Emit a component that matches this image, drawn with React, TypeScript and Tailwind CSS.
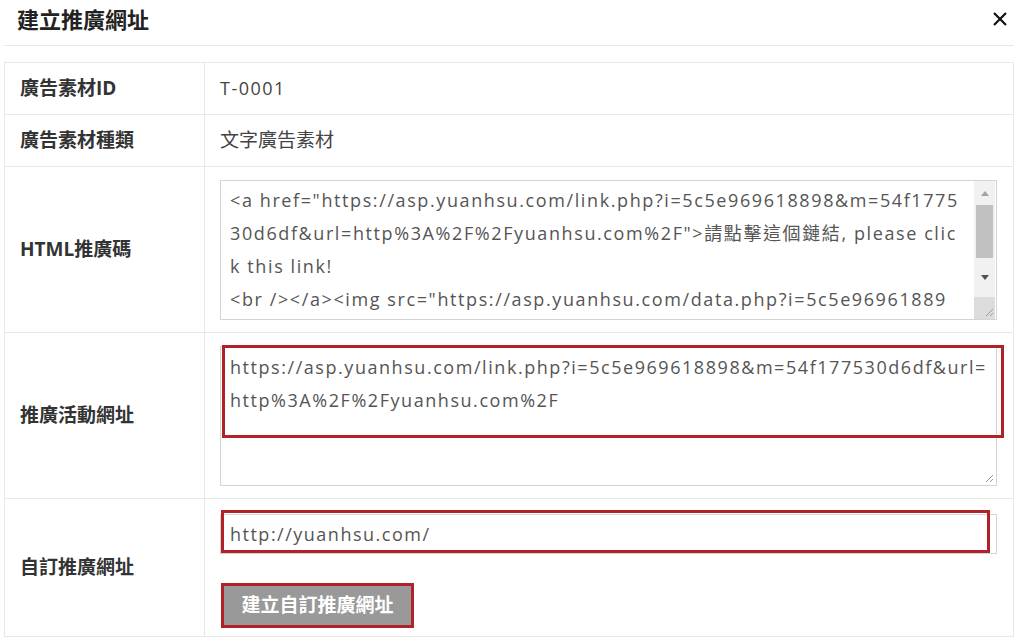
import React from 'react';

const font = { fontFamily: '"Open Sans", "Noto Sans CJK TC", sans-serif' };

const htmlLines = [
  '<a href="https://asp.yuanhsu.com/link.php?i=5c5e969618898&m=54f1775',
  '30d6df&url=http%3A%2F%2Fyuanhsu.com%2F">請點擊這個鏈結, please clic',
  'k this link!',
  '<br /></a><img src="https://asp.yuanhsu.com/data.php?i=5c5e96961889',
];

const linkLines = [
  'https://asp.yuanhsu.com/link.php?i=5c5e969618898&m=54f177530d6df&url=',
  'http%3A%2F%2Fyuanhsu.com%2F',
];

function Resize() {
  return (
    <svg className="absolute right-[2px] bottom-[2px]" width="10" height="10" viewBox="0 0 10 10">
      <path d="M9 2 L2 9 M9 6 L6 9" stroke="#9a9a9a" strokeWidth="1" />
    </svg>
  );
}

function Row({ label, h, children }: { label: string; h: string; children: React.ReactNode }) {
  return (
    <div className={`flex border-b border-[#e8e8e8] ${h}`}>
      <div className="w-[200px] shrink-0 flex items-center pl-[15px] border-r border-[#e8e8e8] text-[19px] font-bold text-[#333]">
        {label}
      </div>
      <div className="flex-1 min-w-0 relative">{children}</div>
    </div>
  );
}

export default function App() {
  return (
    <div className="w-[1018px] h-[638px] bg-white overflow-hidden" style={font}>
      <div className="mx-[4px] h-[46px] border-b border-[#e8e8e8] flex items-center justify-between pl-[13px] pr-[6px]">
        <span className="text-[22px] font-bold text-[#222] -mt-[6px]">建立推廣網址</span>
        <svg width="16" height="16" viewBox="0 0 16 16" className="-mt-[8px]">
          <path d="M2 2 L14 14 M14 2 L2 14" stroke="#111" strokeWidth="2.2" />
        </svg>
      </div>

      <div className="ml-[4px] mt-[16px] w-[1010px] border-t border-l border-r border-[#e8e8e8]">
        <Row label="廣告素材ID" h="h-[52px]">
          <div className="h-full flex items-center pl-[15px] text-[18px] tracking-[1.5px] text-[#444]">T-0001</div>
        </Row>
        <Row label="廣告素材種類" h="h-[52px]">
          <div className="h-full flex items-center pl-[15px] text-[19px] text-[#444]">文字廣告素材</div>
        </Row>
        <Row label="HTML推廣碼" h="h-[166px]">
          <div className="mt-[13px] ml-[15px] mr-[16px] h-[140px] border border-[#d4d4d4] relative flex overflow-hidden">
            <div className="flex-1 pl-[9px] pt-[3px] text-[18px] tracking-[1.6px] text-[#555] leading-[33px] whitespace-nowrap overflow-hidden">
              {htmlLines.map((l) => (
                <div key={l}>{l}</div>
              ))}
            </div>
            <div className="w-[21px] shrink-0 mr-[1px] bg-[#f1f1f1] flex flex-col">
              <div className="h-[24px] flex items-center justify-center">
                <svg width="8" height="5" viewBox="0 0 8 5"><path d="M0 5 L4 0 L8 5 Z" fill="#a3a3a3" /></svg>
              </div>
              <div className="mx-[2px] h-[53px] bg-[#c1c1c1]" />
              <div className="flex-1 flex items-center justify-center">
                <svg width="8" height="5" viewBox="0 0 8 5"><path d="M0 0 L8 0 L4 5 Z" fill="#505050" /></svg>
              </div>
              <div className="h-[22px] bg-[#dcdcdc]" />
            </div>
            <Resize />
          </div>
        </Row>
        <Row label="推廣活動網址" h="h-[166px]">
          <div className="mt-[13px] ml-[15px] mr-[16px] h-[140px] border border-[#d4d4d4] relative">
            <div className="pl-[9px] pt-[4px] text-[18px] tracking-[1.55px] text-[#555] leading-[33px] whitespace-nowrap overflow-hidden">
              {linkLines.map((l) => (
                <div key={l}>{l}</div>
              ))}
            </div>
            <Resize />
          </div>
          <div className="absolute left-[17px] top-[12px] w-[782px] h-[93px] border-[3px] border-[#b0222a]" />
        </Row>
        <Row label="自訂推廣網址" h="h-[138px]">
          <div className="mt-[15px] ml-[15px] mr-[16px] h-[40px] border border-[#d4d4d4] flex items-center pl-[9px] text-[18px] tracking-[1.5px] text-[#555]">
            http://yuanhsu.com/
          </div>
          <div className="absolute left-[16px] top-[11px] w-[769px] h-[43px] border-[3px] border-[#b0222a]" />
          <div className="mt-[29px] ml-[16px] w-[193px] h-[45px] border-[3px] border-[#b0222a] bg-[#999] flex items-center justify-center text-[19px] text-white font-bold">
            建立自訂推廣網址
          </div>
        </Row>
      </div>
    </div>
  );
}
